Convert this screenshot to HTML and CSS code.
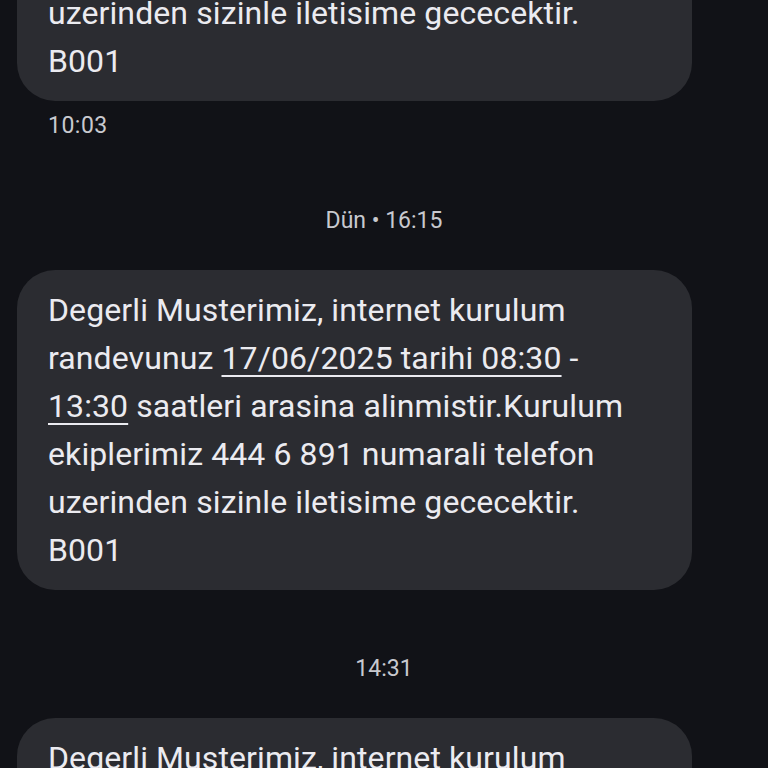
FILE: index.html
```html
<!DOCTYPE html>
<html lang="tr">
<head>
<meta charset="utf-8">
<link rel="stylesheet" href="styles.css">
</head>
<body>
<div class="thread">
  <div class="bubble first">Degerli Musterimiz, internet kurulum<br>randevunuz <span class="link">17/06/2025 tarihi 08:30</span> -<br><span class="link">13:30</span> saatleri arasina alinmistir.Kurulum<br>ekiplerimiz 444 6 891 numarali telefon<br>uzerinden sizinle iletisime gececektir.<br>B001</div>
  <div class="time">10:03</div>
  <div class="divider">Dün • 16:15</div>
  <div class="bubble">Degerli Musterimiz, internet kurulum<br>randevunuz <span class="link">17/06/2025 tarihi 08:30</span> -<br><span class="link">13:30</span> saatleri arasina alinmistir.Kurulum<br>ekiplerimiz 444 6 891 numarali telefon<br>uzerinden sizinle iletisime gececektir.<br>B001</div>
  <div class="divider second">14:31</div>
  <div class="bubble">Degerli Musterimiz, internet kurulum<br>randevunuz <span class="link">17/06/2025 tarihi 08:30</span> -<br><span class="link">13:30</span> saatleri arasina alinmistir.Kurulum<br>ekiplerimiz 444 6 891 numarali telefon<br>uzerinden sizinle iletisime gececektir.<br>B001</div>
</div>
</body>
</html>
```
FILE: styles.css
```css
html, body {
  margin: 0;
  padding: 0;
  background: #111217;
  height: 768px;
  overflow: hidden;
}
.thread {
  display: flex;
  flex-direction: column;
  font-family: Roboto, "Noto Sans", sans-serif;
}
.bubble {
  margin-left: 17px;
  width: 675px;
  box-sizing: border-box;
  padding: 16px 20px 16px 31px;
  background: #2b2c31;
  border-radius: 38px;
  color: #ebebf0;
  font-size: 32px;
  line-height: 48px;
  letter-spacing: 0.1px;
  white-space: nowrap;
}
.bubble.first {
  margin-top: -219px;
}
.link {
  text-decoration: underline;
  text-decoration-thickness: 2px;
  text-underline-offset: 6px;
}
.time {
  margin: 11px 0 0 48px;
  color: #c8c9cf;
  font-size: 23px;
  line-height: 28px;
  letter-spacing: 0.5px;
}
.divider {
  margin: 67px 0 35px;
  text-align: center;
  color: #c8c9cf;
  font-size: 23px;
  line-height: 28px;
}
.divider.second {
  margin-top: 65px;
}
```
